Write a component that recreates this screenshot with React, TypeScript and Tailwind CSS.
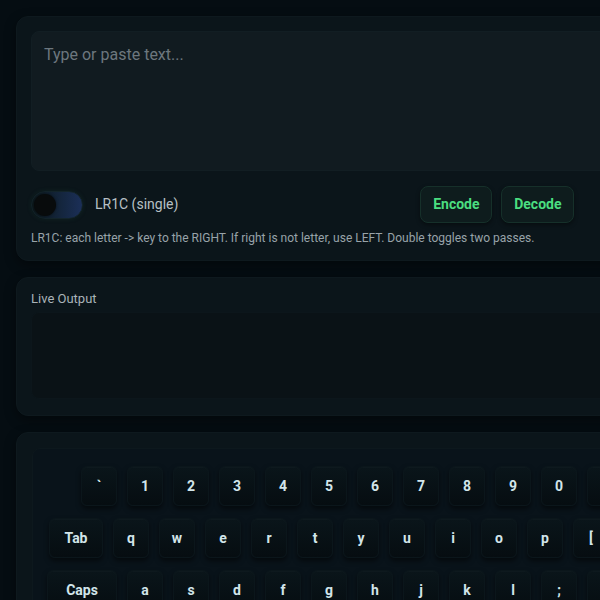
import React from "react";

const row1 = ["`", "1", "2", "3", "4", "5", "6", "7", "8", "9", "0", "-", "="];
const row2 = ["q", "w", "e", "r", "t", "y", "u", "i", "o", "p", "[", "]"];
const row3 = ["a", "s", "d", "f", "g", "h", "j", "k", "l", ";", "'"];

function Key({ label, wide }: { label: string; wide?: string }) {
  return (
    <div
      className={`${wide ?? "w-[36px]"} h-[40px] shrink-0 rounded-md border border-[#0b161b] bg-gradient-to-b from-[#0a151a] to-[#060d11] shadow-[0_3px_5px_rgba(0,0,0,0.5),inset_0_1px_0_rgba(255,255,255,0.02)] flex items-center justify-center text-[14px] font-bold text-[#d2e5ea]`}
    >
      {label}
    </div>
  );
}

export default function App() {
  return (
    <div className="w-[600px] h-[600px] overflow-hidden bg-[#050d12] font-['Roboto',sans-serif]">
      <div className="w-[720px] pt-4 pl-4 flex flex-col gap-4">
        {/* Card 1 */}
        <div className="rounded-xl border border-[#0e191e] bg-[#0b151a] p-[14px] shadow-[0_4px_12px_rgba(0,0,0,0.4)]">
          <textarea
            className="block w-full h-[140px] resize-none rounded-lg border border-[#121e23] bg-[#111b20] px-3 pt-[11px] pb-3 text-base leading-6 text-[#d0d8dc] outline-none placeholder:text-[#6d777e]"
            placeholder="Type or paste text..."
          />
          <div className="mt-[15px] flex items-center h-[37px]">
            <div className="relative w-[52px] h-[28px] rounded-full border border-[#13242a] bg-gradient-to-r from-[#0c181b] to-[#1b2f58] shadow-[0_0_4px_rgba(30,80,60,0.25)]">
              <div className="absolute left-[2px] top-[2px] w-[22px] h-[22px] rounded-full bg-[#080b0c] shadow-[0_0_3px_rgba(0,0,0,0.6)]" />
            </div>
            <span className="ml-[12px] text-[14px] text-[#b7c0c5]">LR1C (single)</span>
            <div className="ml-[242px] flex gap-[9px]">
              <button className="h-[37px] w-[72px] rounded-lg border border-[#16302a] bg-[#0e1c1d] text-[14px] font-bold text-[#4ade80] shadow-[0_2px_4px_rgba(0,0,0,0.4)]">
                Encode
              </button>
              <button className="h-[37px] w-[73px] rounded-lg border border-[#16302a] bg-[#0e1c1d] text-[14px] font-bold text-[#4ade80] shadow-[0_2px_4px_rgba(0,0,0,0.4)]">
                Decode
              </button>
            </div>
          </div>
          <p className="mt-[7px] text-[12px] leading-4 text-[#98a3a9]">
            LR1C: each letter -&gt; key to the RIGHT. If right is not letter, use LEFT. Double toggles two passes.
          </p>
        </div>

        {/* Card 2 */}
        <div className="rounded-xl border border-[#0e191e] bg-[#0b151a] px-[14px] pt-[13px] pb-[16px] shadow-[0_4px_12px_rgba(0,0,0,0.4)]">
          <div className="text-[13px] leading-4 text-[#a9b3b8]">Live Output</div>
          <div className="mt-[5px] h-[87px] rounded-lg border border-[#0c161b] bg-[#0a1216]" />
        </div>

        {/* Card 3 */}
        <div className="rounded-xl border border-[#0e191e] bg-[#0b151a] p-[15px] shadow-[0_4px_12px_rgba(0,0,0,0.4)]">
          <div className="rounded-lg border border-[#0d181d] bg-[#09131a] pl-[14px] pr-[14px] pt-[17px] pb-4 flex flex-col gap-[12px]">
            <div className="flex gap-[10px] ml-[34px]">
              {row1.map((k) => (
                <Key key={k} label={k} />
              ))}
            </div>
            <div className="flex gap-[10px] ml-[2px]">
              <Key label="Tab" wide="w-[54px]" />
              {row2.map((k) => (
                <Key key={k} label={k} />
              ))}
            </div>
            <div className="flex gap-[10px] ml-0">
              <Key label="Caps" wide="w-[70px]" />
              {row3.map((k) => (
                <Key key={k} label={k} />
              ))}
            </div>
          </div>
        </div>
      </div>
    </div>
  );
}
